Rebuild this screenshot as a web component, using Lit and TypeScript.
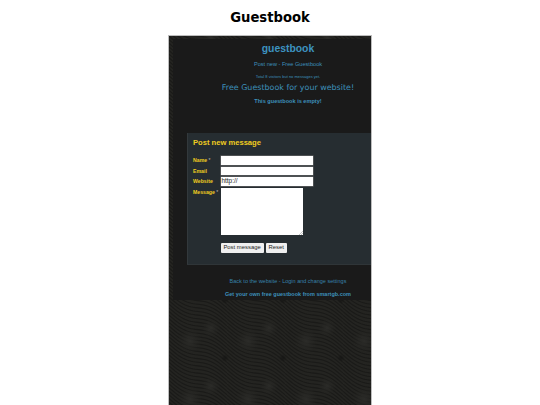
import { LitElement, html, css, svg } from "lit";
import { customElement } from "lit/decorators.js";

const TILE = 58;
const stripes = Array.from({ length: 32 }, (_, k) => {
  let d = "";
  for (let x = 0; x <= TILE; x += 2) {
    const y = x * 0.5 + k * (TILE / 16) - TILE + 3.5 * Math.sin((x / TILE) * 2 * Math.PI);
    d += `${x === 0 ? "M" : "L"}${x} ${y.toFixed(2)}`;
  }
  return d;
}).join("");

const texture = svg`
  <defs>
    <radialGradient id="spot"><stop offset="0" stop-color="#2c2c29" stop-opacity=".95"/><stop offset="1" stop-color="#262623" stop-opacity="0"/></radialGradient>
    <radialGradient id="knot"><stop offset="0" stop-color="#121211" stop-opacity=".7"/><stop offset="1" stop-color="#121211" stop-opacity="0"/></radialGradient>
    <pattern id="wave" width="58" height="58" patternUnits="userSpaceOnUse">
      <rect width="58" height="58" fill="#242421"/>
      <path d=${stripes} fill="none" stroke="#1a1a18" stroke-width="1.3"/>
      <circle cx="21" cy="15" r="12" fill="url(#spot)"/>
      <circle cx="42" cy="2" r="9" fill="url(#spot)"/>
      <circle cx="42" cy="60" r="9" fill="url(#spot)"/>
      <circle cx="56" cy="32" r="4" fill="url(#knot)"/>
      <circle cx="-2" cy="32" r="4" fill="url(#knot)"/>
    </pattern>
  </defs>
  <rect width="100%" height="100%" fill="url(#wave)"/>
`;

@customElement("app-root")
export class AppRoot extends LitElement {
  static styles = css`
    :host { display: block; width: 540px; height: 405px; overflow: hidden; background: #fff; font-family: "Liberation Sans", Arial, sans-serif; }
    h1 { margin: 0; height: 35px; box-sizing: border-box; padding-top: 9px; text-align: center; font: bold 13.2px/17px "DejaVu Sans", sans-serif; color: #000; }
    .frame { position: relative; box-sizing: border-box; margin-left: 168px; width: 204px; height: 370px; border: 1px solid #bdbdbd; border-bottom: 0; overflow: hidden; }
    .tex { position: absolute; inset: 0; width: 100%; height: 100%; }
    .page { position: relative; margin: 3px 0 0 4px; height: 261px; background: #1a1a1a; display: flex; flex-direction: column; }
    .top { padding-left: 32px; text-align: center; color: #3d90ba; height: 94px; }
    .top h2 { margin: 0; padding-top: 3px; font: bold 10.4px/14px "Liberation Sans", sans-serif; color: #3d93c0; }
    .top p { margin: 0; }
    .l1 { font-size: 5.6px; line-height: 7px; margin-top: 4.5px !important; }
    .l2 { font-size: 4px; line-height: 5px; margin-top: 6px !important; }
    .l3 { font: 7.95px/12px "DejaVu Sans", sans-serif; margin-top: 3px !important; }
    .l4 { font-size: 5.6px; font-weight: bold; line-height: 7px; margin-top: 4.5px !important; }
    .box { margin-left: 14px; height: 132px; box-sizing: border-box; background: #262d31; padding: 5px 0 0 5px; border-left: 1px solid #33393c; border-bottom: 1px solid #2f3538; }
    .box h3 { margin: 0 0 8px; font-size: 7.6px; line-height: 10px; font-weight: bold; color: #f0cc20; }
    .row { display: flex; height: 10px; margin-bottom: 0.6px; align-items: flex-start; }
    .row label { width: 27.5px; font-size: 5.2px; line-height: 9px; font-weight: bold; color: #f0cc20; white-space: nowrap; }
    .row label i { font-style: normal; color: #bbb; font-weight: normal; }
    .field { box-sizing: border-box; width: 92px; height: 8.5px; background: #fff; color: #222; font-size: 6.4px; line-height: 8.5px; padding-left: 1px; box-shadow: 0 0 0 .5px #777; }
    .area { box-sizing: border-box; width: 82px; height: 47px; background: #fff; position: relative; }
    .grip { position: absolute; right: 0; bottom: 0; width: 4px; height: 4px; color: #888; }
    .msg { height: 47px; margin-bottom: 8.5px; }
    .btns { display: flex; gap: 2px; padding-left: 27.5px; }
    .btn { box-sizing: border-box; height: 9.5px; background: #efefef; color: #222; font-size: 5.9px; line-height: 9.5px; padding: 0 2.9px; border-radius: 1px; white-space: nowrap; }
    .foot { padding-left: 32px; text-align: center; color: #3d90ba; }
    .f1 { margin: 13px 0 0; font-size: 5.5px; line-height: 7px; color: #3782aa; }
    .f2 { margin: 6px 0 0; font-size: 5.5px; line-height: 7px; font-weight: bold; }
  `;

  render() {
    return html`
      <h1>Guestbook</h1>
      <div class="frame">
        <svg class="tex" aria-hidden="true">${texture}</svg>
        <div class="page">
          <div class="top">
            <h2>guestbook</h2>
            <p class="l1">Post new - Free Guestbook</p>
            <p class="l2">Total 8 visitors but no messages yet.</p>
            <p class="l3">Free Guestbook for your website!</p>
            <p class="l4">This guestbook is empty!</p>
          </div>
          <div class="box">
            <h3>Post new message</h3>
            <div class="row"><label>Name <i>*</i></label><div class="field"></div></div>
            <div class="row"><label>Email</label><div class="field"></div></div>
            <div class="row"><label>Website</label><div class="field">http://</div></div>
            <div class="row msg"><label>Message <i>*</i></label>
              <div class="area"><svg class="grip" viewBox="0 0 4 4"><path d="M0 4L4 0M2 4L4 2" stroke="currentColor" stroke-width=".5"/></svg></div>
            </div>
            <div class="btns"><span class="btn">Post message</span><span class="btn">Reset</span></div>
          </div>
          <div class="foot">
            <p class="f1">Back to the website - Login and change settings</p>
            <p class="f2">Get your own free guestbook from smartgb.com</p>
          </div>
        </div>
      </div>
    `;
  }
}
